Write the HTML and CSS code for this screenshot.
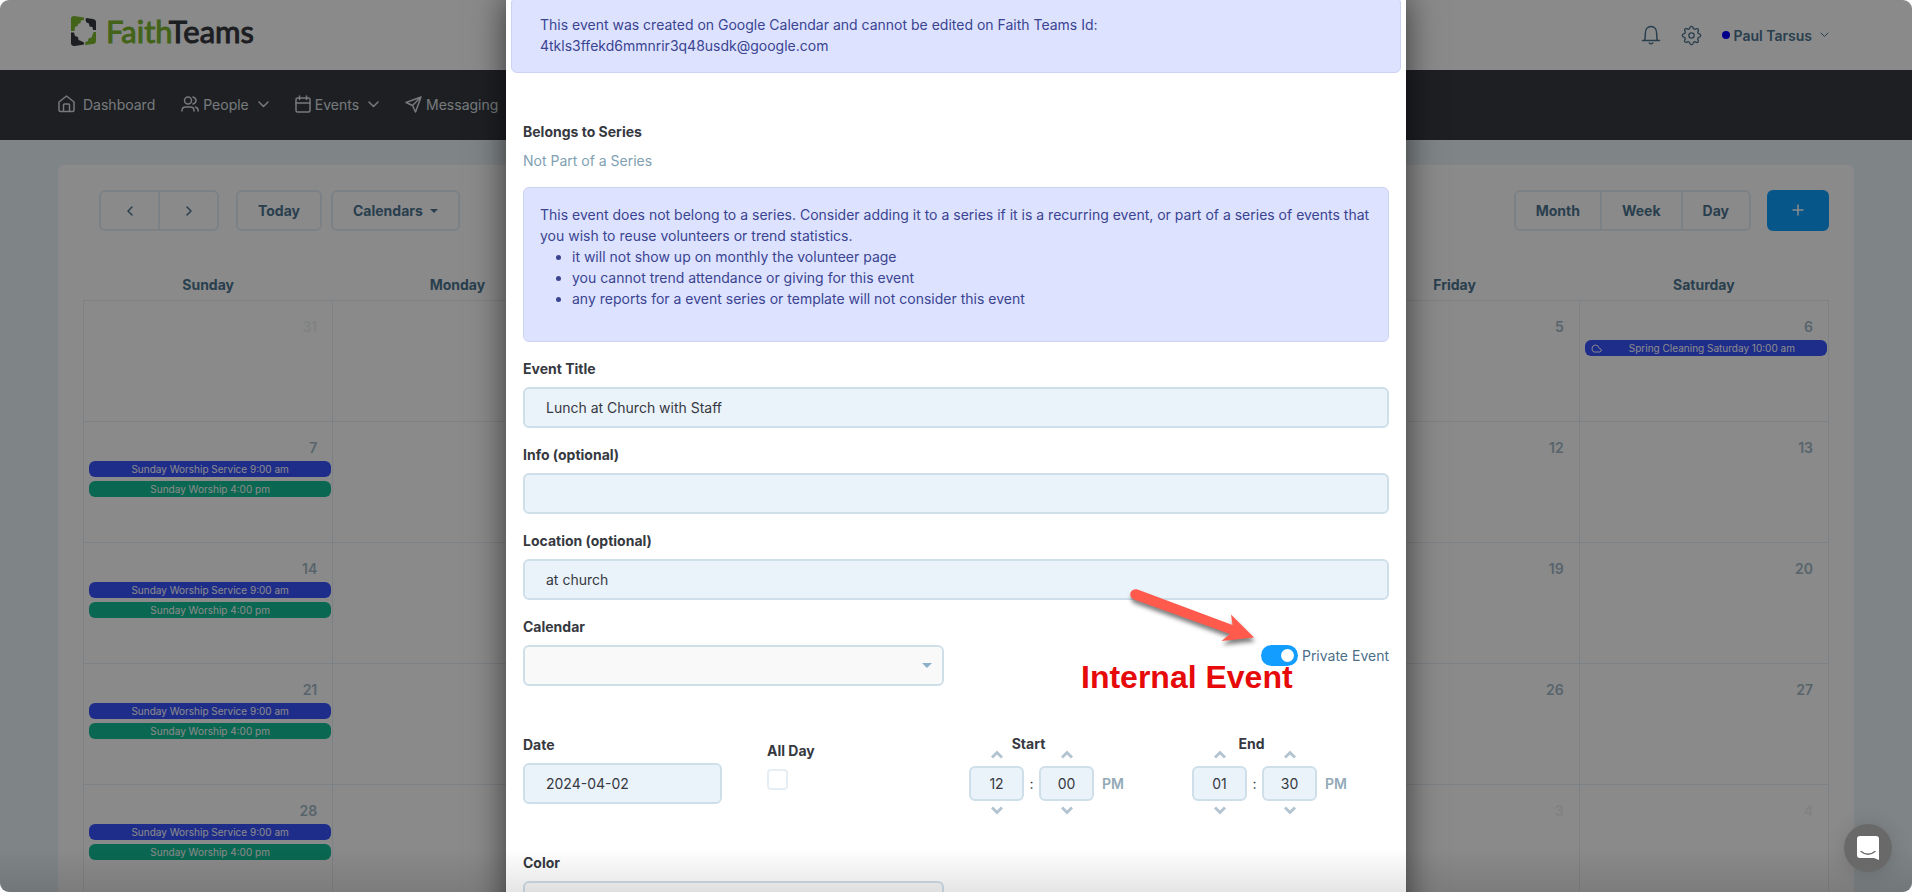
FILE: index.html
```
<!DOCTYPE html>
<html lang="en">
<head>
  <meta charset="UTF-8" />
  <meta name="viewport" content="width=device-width, initial-scale=1.0" />
  <title>FaithTeams - Events</title>
  <link rel="stylesheet" href="styles.css">
</head>
<body>
  <div class="page">
    <header class="header">
      <a href="#" class="logo">
        <svg width="26" height="31" viewBox="0 0 26 31">
          <path fill="#7cb82f" d="M3 0 L13 1.5 V4 L10 4.5 L9.5 7 L7 8 L6.500 10 L4 11 L3.500 15 H0 V3 Q0 0 3 0Z"/>
          <path fill="#36393f" d="M15 2 L22 3 Q25 3.500 25 6 V14 H22 L21.500 11 L18.500 10.500 L18 7.500 L15.500 6.500 L14.500 4.500Z"/>
          <path fill="#7cb82f" d="M25 16 V25 Q25 27.500 22 28 L14 29 L14.500 26 L17 25 L17.500 22.500 L20.500 21.500 L21.500 19 L22.500 16Z"/>
          <path fill="#36393f" d="M0 16.500 H3 L4 20 L7 21 L7.500 24 L10 25 L13 26.500 V28.500 L4 30 Q0 30.500 0 27Z"/>
        </svg>
        <span class="logo-text"><span class="green">Faith</span>Teams</span>
      </a>
      <div class="user-nav">
        <button class="icon-btn" aria-label="Notifications">
          <svg class="stroke" width="20" height="20" viewBox="0 0 20 20"><path d="M1.500 15.500H18.500M3.500 15.500C4.300 14 4.300 12.500 4.300 8.500C4.300 4.500 6.500 1.500 10 1.500S15.700 4.500 15.700 8.500C15.700 12.500 15.700 14 16.500 15.500M8.300 18Q10 19.500 11.700 18"/></svg>
        </button>
        <button class="icon-btn" aria-label="Settings">
          <svg class="stroke" width="21" height="21" viewBox="0 0 24 24"><circle cx="12" cy="12" r="3"/><path d="M10.300 2.500 Q12 .5 13.700 2.500 L14.300 4.300 L16 5 L17.800 4.200 Q20.500 4 19.900 6.500 L19 8.100 L19.700 9.700 L21.500 10.300 Q23.500 12 21.500 13.700 L19.700 14.300 L19 16 L19.800 17.800 Q20 20.500 17.500 19.900 L15.900 19 L14.300 19.700 L13.700 21.500 Q12 23.500 10.300 21.500 L9.700 19.700 L8 19 L6.200 19.800 Q3.500 20 4.100 17.500 L5 15.900 L4.300 14.300 L2.500 13.700 Q.5 12 2.500 10.300 L4.300 9.700 L5 8 L4.200 6.200 Q4 3.500 6.500 4.100 L8.100 5 L9.700 4.300Z"/></svg>
        </button>
        <button class="user-btn">
          <span class="dot"></span>Paul Tarsus
          <svg class="stroke thin" width="9" height="6" viewBox="0 0 9 6"><path d="M1 1L4.500 4.500L8 1"/></svg>
        </button>
      </div>
    </header>

    <nav class="nav">
      <a href="#" class="nav-home">
        <svg class="stroke" width="17" height="18" viewBox="0 0 17 18"><path d="M1 7L8.500 1L16 7V15Q16 16.500 14.500 16.500H2.500Q1 16.500 1 15ZM5.500 16.500V10Q5.500 9 6.500 9H10.500Q11.500 9 11.500 10V16.500"/></svg>
        Dashboard
      </a>
      <a href="#">
        <svg class="stroke" width="18" height="18" viewBox="0 0 18 18"><circle cx="7" cy="5.500" r="3.500"/><path d="M1 16V15.500Q1 12 4.500 12H9.500Q13 12 13 15.500V16M12 2Q15 3 15 5.500T12 9M14.500 12Q17.200 13 17.200 16"/></svg>
        People
        <svg class="stroke chev" width="11" height="7" viewBox="0 0 11 7"><path d="M1 1L5.500 5.500L10 1"/></svg>
      </a>
      <a href="#">
        <svg class="stroke" width="16" height="18" viewBox="0 0 16 18"><rect x="1" y="3" width="14" height="14" rx="1.500"/><path d="M1 8H15M4.500 1V4.500M11.500 1V4.500"/></svg>
        Events
        <svg class="stroke chev" width="11" height="7" viewBox="0 0 11 7"><path d="M1 1L5.500 5.500L10 1"/></svg>
      </a>
      <a href="#">
        <svg class="stroke" width="17" height="17" viewBox="0 0 17 17"><path d="M16 1L1 6.500L7.500 9.500L10.500 16ZM16 1L7.500 9.500"/></svg>
        Messaging
      </a>
    </nav>

    <main class="card">
      <div class="toolbar">
        <div class="btn-group">
          <button class="btn arrow" aria-label="Previous"><svg class="stroke" width="6" height="10" viewBox="0 0 6 10"><path d="M5 1L1 5L5 9"/></svg></button>
          <button class="btn arrow" aria-label="Next"><svg class="stroke" width="6" height="10" viewBox="0 0 6 10"><path d="M1 1L5 5L1 9"/></svg></button>
        </div>
        <button class="btn btn-today">Today</button>
        <button class="btn btn-calendars">Calendars <span class="caret"></span></button>
        <div class="btn-group views">
          <button class="btn">Month</button>
          <button class="btn">Week</button>
          <button class="btn">Day</button>
        </div>
        <button class="btn-add" aria-label="Add event"><svg class="stroke" width="12" height="12" viewBox="0 0 12 12"><path d="M6 1V11M1 6H11"/></svg></button>
      </div>

      <table class="calendar">
        <thead>
          <tr><th>Sunday</th><th>Monday</th><th>Tuesday</th><th>Wednesday</th><th>Thursday</th><th>Friday</th><th>Saturday</th></tr>
        </thead>
        <tbody>
          <tr>
            <td class="other"><span class="day">31</span></td>
            <td><span class="day">1</span></td>
            <td><span class="day">2</span></td>
            <td><span class="day">3</span></td>
            <td><span class="day">4</span></td>
            <td><span class="day">5</span></td>
            <td>
              <span class="day">6</span>
              <a href="#" class="event blue with-icon"><svg class="cloud" width="11" height="9" viewBox="0 0 11 9"><path d="M3 8H8.500Q10.500 7.700 10.400 6Q10 4.500 8.300 4.500Q7.500 1 4.500 1Q1.200 1.200 1 4.500Q1 7.600 3 8Z"/></svg>Spring Cleaning Saturday 10:00 am</a>
            </td>
          </tr>
          <tr>
            <td>
              <span class="day">7</span>
              <a href="#" class="event blue">Sunday Worship Service 9:00 am</a>
              <a href="#" class="event green-bg">Sunday Worship 4:00 pm</a>
            </td>
            <td><span class="day">8</span></td>
            <td><span class="day">9</span></td>
            <td><span class="day">10</span></td>
            <td><span class="day">11</span></td>
            <td><span class="day">12</span></td>
            <td><span class="day">13</span></td>
          </tr>
          <tr>
            <td>
              <span class="day">14</span>
              <a href="#" class="event blue">Sunday Worship Service 9:00 am</a>
              <a href="#" class="event green-bg">Sunday Worship 4:00 pm</a>
            </td>
            <td><span class="day">15</span></td>
            <td><span class="day">16</span></td>
            <td><span class="day">17</span></td>
            <td><span class="day">18</span></td>
            <td><span class="day">19</span></td>
            <td><span class="day">20</span></td>
          </tr>
          <tr>
            <td>
              <span class="day">21</span>
              <a href="#" class="event blue">Sunday Worship Service 9:00 am</a>
              <a href="#" class="event green-bg">Sunday Worship 4:00 pm</a>
            </td>
            <td><span class="day">22</span></td>
            <td><span class="day">23</span></td>
            <td><span class="day">24</span></td>
            <td><span class="day">25</span></td>
            <td><span class="day">26</span></td>
            <td><span class="day">27</span></td>
          </tr>
          <tr>
            <td>
              <span class="day">28</span>
              <a href="#" class="event blue">Sunday Worship Service 9:00 am</a>
              <a href="#" class="event green-bg">Sunday Worship 4:00 pm</a>
            </td>
            <td><span class="day">29</span></td>
            <td><span class="day">30</span></td>
            <td class="other"><span class="day">1</span></td>
            <td class="other"><span class="day">2</span></td>
            <td class="other"><span class="day">3</span></td>
            <td class="other"><span class="day">4</span></td>
          </tr>
        </tbody>
      </table>
    </main>

    <div class="overlay">
      <form class="modal">
        <div class="alert alert-top">This event was created on Google Calendar and cannot be edited on Faith Teams Id:<br>4tkls3ffekd6mmnrir3q48usdk@google.com</div>

        <h2 class="label">Belongs to Series</h2>
        <p class="muted">Not Part of a Series</p>

        <div class="alert">
          This event does not belong to a series. Consider adding it to a series if it is a recurring event, or part of a series of events that you wish to reuse volunteers or trend statistics.
          <ul>
            <li>it will not show up on monthly the volunteer page</li>
            <li>you cannot trend attendance or giving for this event</li>
            <li>any reports for a event series or template will not consider this event</li>
          </ul>
        </div>

        <div class="field">
          <label class="label" for="title">Event Title</label>
          <input class="input" type="text" id="title" value="Lunch at Church with Staff">
        </div>
        <div class="field">
          <label class="label" for="info">Info (optional)</label>
          <input class="input" type="text" id="info">
        </div>
        <div class="field">
          <label class="label" for="location">Location (optional)</label>
          <input class="input" type="text" id="location" value="at church">
        </div>

        <div class="row">
          <div class="field half">
            <label class="label" for="calendar">Calendar</label>
            <select class="input select" id="calendar"><option></option></select>
          </div>
          <label class="switch-label"><input type="checkbox" class="switch" checked>Private Event</label>
        </div>

        <div class="row-date">
          <div class="date-field">
            <label class="label" for="date">Date</label>
            <input class="input" type="text" id="date" value="2024-04-02">
          </div>
          <div class="all-day">
            <label class="label" for="allday">All Day</label>
            <input type="checkbox" class="check" id="allday">
          </div>
          <div class="time">
            <span class="label time-label">Start</span>
            <button type="button" class="step up" aria-label="Hour up"><svg width="12" height="9" viewBox="0 0 12 9"><path d="M1 7.500L6 2.500L11 7.500"/></svg></button>
            <button type="button" class="step up min" aria-label="Minute up"><svg width="12" height="9" viewBox="0 0 12 9"><path d="M1 7.500L6 2.500L11 7.500"/></svg></button>
            <input class="input time-input" type="text" value="12" aria-label="Start hour">
            <span class="colon">:</span>
            <input class="input time-input" type="text" value="00" aria-label="Start minute">
            <button type="button" class="ampm">PM</button>
            <button type="button" class="step down" aria-label="Hour down"><svg width="12" height="9" viewBox="0 0 12 9"><path d="M1 1.500L6 6.500L11 1.500"/></svg></button>
            <button type="button" class="step down min" aria-label="Minute down"><svg width="12" height="9" viewBox="0 0 12 9"><path d="M1 1.500L6 6.500L11 1.500"/></svg></button>
          </div>
          <div class="time">
            <span class="label time-label">End</span>
            <button type="button" class="step up" aria-label="Hour up"><svg width="12" height="9" viewBox="0 0 12 9"><path d="M1 7.500L6 2.500L11 7.500"/></svg></button>
            <button type="button" class="step up min" aria-label="Minute up"><svg width="12" height="9" viewBox="0 0 12 9"><path d="M1 7.500L6 2.500L11 7.500"/></svg></button>
            <input class="input time-input" type="text" value="01" aria-label="End hour">
            <span class="colon">:</span>
            <input class="input time-input" type="text" value="30" aria-label="End minute">
            <button type="button" class="ampm">PM</button>
            <button type="button" class="step down" aria-label="Hour down"><svg width="12" height="9" viewBox="0 0 12 9"><path d="M1 1.500L6 6.500L11 1.500"/></svg></button>
            <button type="button" class="step down min" aria-label="Minute down"><svg width="12" height="9" viewBox="0 0 12 9"><path d="M1 1.500L6 6.500L11 1.500"/></svg></button>
          </div>
        </div>

        <div class="field half">
          <label class="label" for="color">Color</label>
          <select class="input select" id="color"><option></option></select>
        </div>

        <!-- callout on top of the form -->
        <svg class="callout-arrow" width="140" height="68" viewBox="0 0 140 68">
          <path fill="#ff5a4c" d="M12.500 5.500 Q8 4.500 5.500 8.500 Q4.500 13.500 9 15.500 L105 50 L96.500 57 L129 53.500 L106 30.500 L107.500 41Z"/>
        </svg>
        <div class="callout-text">Internal Event</div>
      </form>
    </div>

    <div class="bottom-shade"></div>
    <button class="chat" aria-label="Open chat">
      <svg width="22" height="24" viewBox="0 0 22 24"><path fill="#fff" d="M3 0H19Q22 0 22 3V24L17 22H3Q0 22 0 19V3Q0 0 3 0Z"/><path fill="none" stroke="#696969" stroke-width="1.300" stroke-linecap="round" d="M4 15.500Q11 21 18 15.500"/></svg>
    </button>
  </div>
</body>
</html>
```
FILE: styles.css
```
* {
  box-sizing: border-box;
}

body {
  margin: 0;
  background: #fff;
  font-family: Inter, 'Liberation Sans', sans-serif;
  font-size: 14px;
  line-height: 21px;
  color: #36393f;
}

button, input, select {
  font: inherit;
  color: inherit;
}

button {
  padding: 0;
  border: 0;
  background: none;
  cursor: pointer;
}

a {
  color: inherit;
  text-decoration: none;
}

.page {
  position: relative;
  height: 100vh;
  overflow: hidden;
  background: #ebf4f8;
  border-radius: 9px;
}

.stroke {
  fill: none;
  stroke: currentColor;
  stroke-width: 1.5;
  stroke-linecap: round;
  stroke-linejoin: round;
}

.thin {
  stroke-width: 1;
}

/* header */
.header {
  display: flex;
  justify-content: space-between;
  align-items: center;
  height: 70px;
  padding: 0 83px 0 71px;
  background: #fff;
  color: #4c7590;
}

.logo {
  display: flex;
  align-items: center;
  gap: 9px;
  padding-bottom: 8px;
}

.logo-text {
  font-family: Lato, sans-serif;
  font-size: 31px;
  line-height: 30px;
  color: #36393f;
  -webkit-text-stroke: 1px currentColor;
}

.green {
  color: #7cb82f;
}

.user-nav {
  display: flex;
  align-items: center;
  gap: 20px;
}

.icon-btn svg {
  display: block;
}

.user-btn {
  display: flex;
  align-items: center;
  gap: 8px;
  font-weight: 600;
}

.dot {
  width: 8px;
  height: 8px;
  margin-right: -4px;
  border-radius: 50%;
  background: #00f;
}

/* main nav */
.nav {
  display: flex;
  align-items: center;
  gap: 26px;
  height: 70px;
  padding: 0 58px 2px;
  background: #363a41;
  color: #dce0e4;
}

.nav a {
  display: flex;
  align-items: center;
  gap: 4px;
}

.nav .nav-home {
  gap: 8px;
}

.nav .chev {
  margin-left: 5px;
}

/* calendar */
.card {
  margin: 25px 58px 0;
  padding: 25px;
  background: #fff;
  border-radius: 6px;
}

.toolbar {
  display: flex;
  padding-left: 16px;
}

.btn {
  height: 41px;
  padding: 0 20px;
  border: 2px solid #e6eef5;
  border-radius: 6px;
  font-weight: 700;
  color: #4c7590;
}

.btn-group {
  display: flex;
}

.btn-group .btn + .btn {
  margin-left: -2px;
  border-top-left-radius: 0;
  border-bottom-left-radius: 0;
}

.btn-group .btn:not(:last-child) {
  border-top-right-radius: 0;
  border-bottom-right-radius: 0;
}

.arrow {
  width: 61px;
}

.btn-today {
  margin-left: 17px;
}

.btn-calendars {
  margin-left: 9px;
}

.caret {
  display: inline-block;
  margin-left: 4px;
  vertical-align: 3px;
  border: 4px solid transparent;
  border-top-color: currentColor;
  border-bottom: 0;
}

.views {
  margin-left: auto;
}

.btn-add {
  width: 62px;
  height: 41px;
  margin-left: 16px;
  border-radius: 6px;
  background: #0d9fff;
  color: #fff;
}

.calendar {
  width: 100%;
  margin-top: 37px;
  border-collapse: collapse;
  table-layout: fixed;
}

.calendar th {
  height: 32px;
  padding: 1px 0 0;
  color: #4c7590;
  font-weight: 700;
}

.calendar td {
  height: 121px;
  padding: 15px 1px 0 5px;
  border: 1px solid #e6eef5;
  vertical-align: top;
}

.day {
  display: block;
  height: 24px;
  padding-right: 14px;
  text-align: right;
  font-weight: 600;
  color: #a3bac8;
}

.other .day {
  color: #edf0f3;
}

.event {
  position: relative;
  display: block;
  height: 16px;
  margin-bottom: 4px;
  border-radius: 6px;
  color: #fff;
  font-size: 10px;
  line-height: 16px;
  text-align: center;
}

.with-icon {
  padding-left: 12px;
}

.blue {
  background: #3853ff;
}

.green-bg {
  background: #14be96;
}

.cloud {
  position: absolute;
  left: 6px;
  top: 4px;
  fill: none;
  stroke: #fff;
}

/* event modal */
.overlay {
  position: absolute;
  inset: 0;
  overflow: hidden;
  background: rgba(0, 0, 0, 0.46);
}

.modal {
  position: relative;
  width: 900px;
  max-width: 100%;
  min-height: 100%;
  margin: 0 auto;
  padding: 0 17px 16px;
  background: #fff;
  box-shadow: 0 0 32px rgba(0, 0, 0, 0.6);
}

.alert {
  padding: 16px;
  margin-bottom: 16px;
  border: 1px solid #cdd2f5;
  border-radius: 6px;
  background: #dde2ff;
  color: #3a4491;
}

.alert-top {
  margin: -3px -12px 48px;
  padding: 16px 28px;
}

.alert ul {
  margin: 0 0 16px;
  padding-left: 32px;
}

.label {
  display: block;
  margin: 0 0 8px;
  font-size: 14px;
  line-height: 21px;
  font-weight: 700;
}

.muted {
  margin: 0 0 16px;
  color: #7f9fb3;
}

.field {
  margin-bottom: 16px;
}

.input {
  display: block;
  width: 100%;
  height: 41px;
  padding: 0 21px;
  border: 2px solid #cfdfe9;
  border-radius: 6px;
  background: #eaf2fa;
  outline: none;
}

.half {
  width: calc(50% - 12px);
}

.select {
  appearance: none;
  background: #f9f9f9 url("data:image/svg+xml,%3Csvg xmlns='http://www.w3.org/2000/svg' width='10' height='5'%3E%3Cpath fill='%238ab0ca' d='M0 0H10L5 5Z'/%3E%3C/svg%3E") no-repeat right 10px center;
}

.row {
  display: flex;
  justify-content: space-between;
  align-items: flex-end;
  margin-bottom: 48px;
}

.row .field {
  margin-bottom: 0;
}

.switch-label {
  display: flex;
  align-items: center;
  gap: 4px;
  margin-bottom: 20px;
  color: #4c6f8a;
}

.switch {
  appearance: none;
  width: 37px;
  height: 21px;
  margin: 0;
  padding: 4px;
  border-radius: 11px;
  background: #cfdfe9;
}

.switch::before {
  content: '';
  display: block;
  width: 13px;
  height: 13px;
  border-radius: 50%;
  background: #fff;
}

.switch:checked {
  background: #129dff;
}

.switch:checked::before {
  margin-left: auto;
}

.row-date {
  display: grid;
  grid-template-columns: 199px 157px 178px 178px;
  column-gap: 45px;
  height: 70px;
  margin-bottom: 48px;
}

.all-day {
  padding-top: 6px;
}

.check {
  appearance: none;
  display: block;
  width: 21px;
  height: 21px;
  margin: 0;
  border: 2px solid #e6eef5;
  border-radius: 4px;
}

.time {
  display: grid;
  grid-template-columns: 55px 15px 55px 38px;
  grid-template-rows: 16px 9px 42px 9px;
  align-content: start;
  justify-items: center;
}

.time-label {
  grid-column: 1 / 4;
  margin: 0;
  padding-right: 6px;
  line-height: 19px;
}

.step svg {
  display: block;
  fill: none;
  stroke: #b3c4d1;
  stroke-width: 3;
}

.up {
  grid-row: 2;
  grid-column: 1;
}

.down {
  grid-row: 4;
  grid-column: 1;
  margin-top: 5px;
}

.min {
  grid-column: 3;
}

.time-input, .colon, .ampm {
  grid-row: 3;
  margin-top: 7px;
}

.time-input {
  height: 35px;
  padding: 0;
  text-align: center;
}

.colon, .ampm {
  line-height: 35px;
}

.ampm {
  font-weight: 600;
  color: #93a9b8;
}

.callout-arrow {
  position: absolute;
  left: 619px;
  top: 587px;
  filter: drop-shadow(1px 4px 2px rgba(0, 0, 0, 0.5));
}

.callout-text {
  position: absolute;
  left: 575px;
  top: 662px;
  color: #e60a0a;
  font-family: 'Liberation Sans', sans-serif;
  font-size: 32px;
  line-height: 36px;
  font-weight: 700;
}

.bottom-shade {
  position: absolute;
  left: 0;
  right: 0;
  bottom: 0;
  height: 44px;
  background: linear-gradient(to bottom, rgba(0, 0, 0, 0), rgba(0, 0, 0, 0.1));
  pointer-events: none;
}

.chat {
  position: absolute;
  right: 20px;
  bottom: 20px;
  display: flex;
  align-items: center;
  justify-content: center;
  width: 48px;
  height: 48px;
  border-radius: 50%;
  background: #696969;
  box-shadow: 0 2px 20px rgba(0, 0, 0, 0.15);
}
```
